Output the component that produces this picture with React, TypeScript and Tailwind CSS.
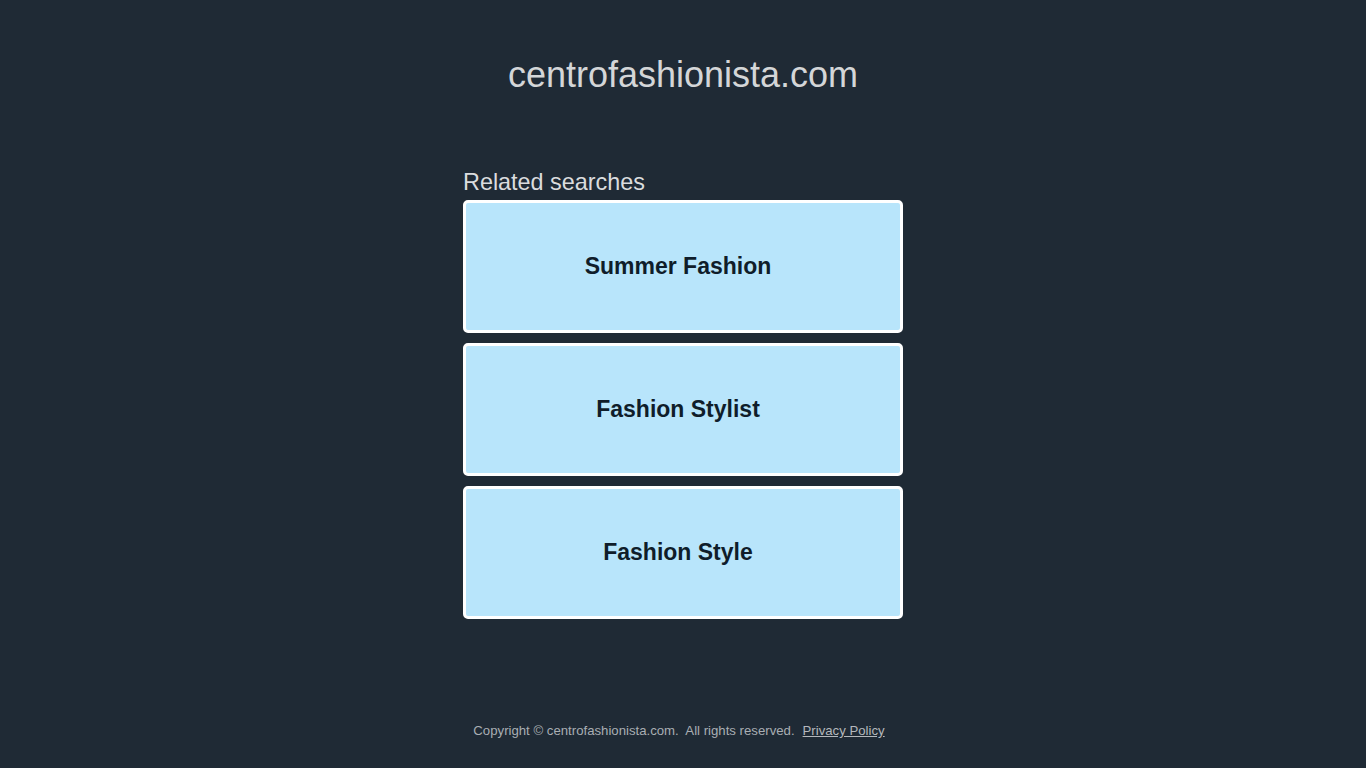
import React from 'react';

const searches = ['Summer Fashion', 'Fashion Stylist', 'Fashion Style'];

export default function App() {
    return (
        <div
            className="min-h-screen flex flex-col items-center bg-[#1f2a35]"
            style={{ fontFamily: '"Liberation Sans", Arial, sans-serif' }}
        >
            <h1 className="mt-[54px] text-[36px] leading-[41px] text-[#d4d6d8]">centrofashionista.com</h1>

            <div className="mt-[74px] w-[440px]">
                <div className="mb-[5px] text-[23.4px] leading-[26px] text-[#dadcde]">Related searches</div>
                <div className="flex flex-col gap-[10px]">
                    {searches.map((s) => (
                        <a
                            key={s}
                            href="#"
                            className="h-[133px] flex items-center justify-center pr-[10px] rounded-[5px] border-[3px] border-white bg-[#b8e5fb] text-[23px] font-bold text-[#0f1d2a]"
                        >
                            {s}
                        </a>
                    ))}
                </div>
            </div>

            <footer className="mt-auto pb-[30px] pr-[8px] text-[13.2px] leading-[15px] text-[#a9aeb3]">
                <span>Copyright © centrofashionista.com.&nbsp; All rights reserved.</span>
                <a href="#" className="ml-[8px] underline text-[#b4b8bc]">
                    Privacy Policy
                </a>
            </footer>
        </div>
    );
}
